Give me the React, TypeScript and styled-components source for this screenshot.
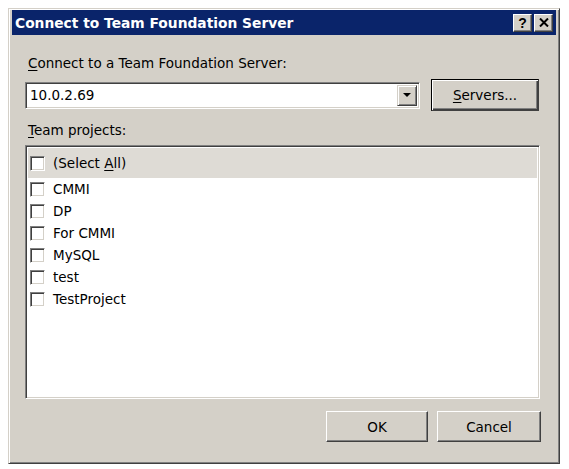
import { createGlobalStyle } from "styled-components";
import styled from "styled-components";

const GlobalStyle = createGlobalStyle`
  body {
    margin: 8px;
    background: #ffffff;
    font-family: "DejaVu Sans", "Liberation Sans", sans-serif;
    font-size: 13.5px;
  }
`;

const Window = styled.div`
  width: 552px;
  height: 456px;
  box-sizing: border-box;
  background: #d4d0c8;
  border-top: 1px solid #d4d0c8;
  border-left: 1px solid #d4d0c8;
  border-right: 1px solid #404040;
  border-bottom: 1px solid #404040;
  box-shadow: inset 1px 1px 0 #ffffff, inset -1px -1px 0 #808080;
  padding: 1px 3px 3px 3px;
  display: flex;
  flex-direction: column;
`;

const TitleBar = styled.div`
  height: 25px;
  background: #0a246a;
  display: flex;
  align-items: center;
  padding: 0 3px 0 3px;
  gap: 2px;
`;

const Title = styled.div`
  flex: 1;
  color: #ffffff;
  font-weight: bold;
  font-size: 13.8px;
`;

const CaptionButton = styled.div`
  width: 19px;
  height: 18px;
  box-sizing: border-box;
  background: #d4d0c8;
  border-top: 1px solid #ffffff;
  border-left: 1px solid #ffffff;
  border-right: 1px solid #404040;
  border-bottom: 1px solid #404040;
  box-shadow: inset -1px -1px 0 #808080;
  display: flex;
  align-items: center;
  justify-content: center;
  font-weight: bold;
  font-size: 14px;
  color: #000;
  font-family: "Liberation Sans", sans-serif;
`;

const Body = styled.div`
  flex: 1;
  display: flex;
  flex-direction: column;
  padding: 20px 15px 0 13px;
`;

const Label = styled.div`
  color: #000;
  padding-left: 3px;
  height: 16px;
  line-height: 16px;
`;

const Key = styled.span`
  text-decoration: underline;
  text-underline-offset: 2px;
`;

const ServerRow = styled.div`
  display: flex;
  align-items: center;
  margin-top: 8px;
`;

const Combo = styled.div`
  width: 395px;
  height: 27px;
  box-sizing: border-box;
  background: #fff;
  border-top: 1px solid #808080;
  border-left: 1px solid #808080;
  border-right: 1px solid #ffffff;
  border-bottom: 1px solid #ffffff;
  box-shadow: inset 1px 1px 0 #404040, inset -1px -1px 0 #d4d0c8;
  display: flex;
  align-items: center;
  padding: 2px;
`;

const ComboText = styled.div`
  flex: 1;
  padding-left: 2px;
  color: #000;
`;

const DropButton = styled.div`
  width: 20px;
  height: 21px;
  box-sizing: border-box;
  background: #d4d0c8;
  border-top: 1px solid #d4d0c8;
  border-left: 1px solid #d4d0c8;
  border-right: 1px solid #404040;
  border-bottom: 1px solid #404040;
  box-shadow: inset 1px 1px 0 #ffffff, inset -1px -1px 0 #808080;
  display: flex;
  align-items: center;
  justify-content: center;
`;

const Arrow = styled.div`
  width: 0;
  height: 0;
  border-left: 4px solid transparent;
  border-right: 4px solid transparent;
  border-top: 4px solid #000;
`;

const Button = styled.div<{ $default?: boolean; $w: number }>`
  width: ${(p) => p.$w}px;
  height: ${(p) => (p.$default ? 32 : 31)}px;
  box-sizing: border-box;
  background: #d4d0c8;
  color: #000;
  display: flex;
  align-items: center;
  justify-content: center;
  border-top: 1px solid ${(p) => (p.$default ? "#000" : "#ffffff")};
  border-left: 1px solid ${(p) => (p.$default ? "#000" : "#ffffff")};
  border-right: 1px solid #404040;
  border-bottom: 1px solid #404040;
  box-shadow: ${(p) =>
    p.$default
      ? "inset 1px 1px 0 #ffffff, inset -1px -1px 0 #404040, inset -2px -2px 0 #808080"
      : "inset -1px -1px 0 #808080"};
`;

const ProjectsLabel = styled(Label)`
  margin-top: 11px;
`;

const ListBox = styled.div`
  margin-top: 7px;
  width: 515px;
  height: 254px;
  box-sizing: border-box;
  background: #fff;
  border-top: 1px solid #808080;
  border-left: 1px solid #808080;
  border-right: 1px solid #ffffff;
  border-bottom: 1px solid #ffffff;
  box-shadow: inset 1px 1px 0 #404040, inset -1px -1px 0 #d4d0c8;
  padding: 2px;
  display: flex;
  flex-direction: column;
`;

const Row = styled.div<{ $header?: boolean }>`
  display: flex;
  align-items: center;
  gap: 8px;
  height: ${(p) => (p.$header ? 30 : 22)}px;
  padding-left: 2px;
  background: ${(p) => (p.$header ? "#dedbd5" : "transparent")};
  color: #000;
`;

const Check = styled.div`
  width: 15px;
  height: 15px;
  box-sizing: border-box;
  background: #fff;
  border-top: 1px solid #808080;
  border-left: 1px solid #808080;
  border-right: 1px solid #ffffff;
  border-bottom: 1px solid #ffffff;
  box-shadow: inset 1px 1px 0 #404040, inset -1px -1px 0 #d4d0c8;
`;

const Footer = styled.div`
  display: flex;
  justify-content: flex-end;
  gap: 9px;
  margin-top: 12px;
`;

const projects = ["CMMI", "DP", "For CMMI", "MySQL", "test", "TestProject"];

export default function App() {
  return (
    <>
      <GlobalStyle />
      <Window>
        <TitleBar>
          <Title>Connect to Team Foundation Server</Title>
          <CaptionButton>?</CaptionButton>
          <CaptionButton>
            <svg width="10" height="9" viewBox="0 0 10 9">
              <path d="M1 0.5 L9 8.5 M9 0.5 L1 8.5" stroke="#000" strokeWidth="2" />
            </svg>
          </CaptionButton>
        </TitleBar>
        <Body>
          <Label>
            <Key>C</Key>onnect to a Team Foundation Server:
          </Label>
          <ServerRow>
            <Combo>
              <ComboText>10.0.2.69</ComboText>
              <DropButton>
                <Arrow />
              </DropButton>
            </Combo>
            <Button $default $w={108} style={{ marginLeft: 11 }}>
              <span>
                <Key>S</Key>ervers...
              </span>
            </Button>
          </ServerRow>
          <ProjectsLabel>
            <Key>T</Key>eam projects:
          </ProjectsLabel>
          <ListBox>
            <Row $header>
              <Check />
              <span>
                (Select <Key>A</Key>ll)
              </span>
            </Row>
            {projects.map((p) => (
              <Row key={p}>
                <Check />
                <span>{p}</span>
              </Row>
            ))}
          </ListBox>
          <Footer>
            <Button $w={102}>OK</Button>
            <Button $w={104}>Cancel</Button>
          </Footer>
        </Body>
      </Window>
    </>
  );
}
